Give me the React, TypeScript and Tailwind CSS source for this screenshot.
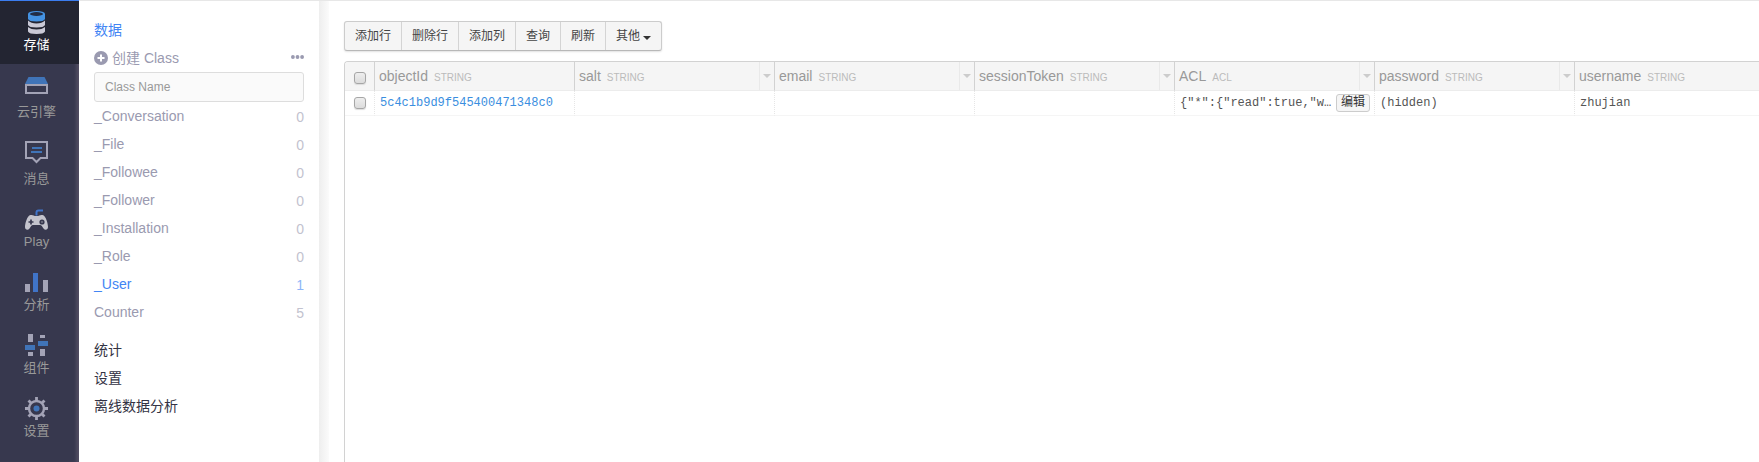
import React from "react";

const StorageIcon = () => (
  <svg width="17" height="24" viewBox="0 0 17 24" aria-hidden="true">
    <path d="M0 10.500Q3 13.500 8.500 13.500T17 10.500v4.500q-1 2.500-8.500 2.500T0 15z" fill="#c9c9d6" />
    <path d="M0 17Q3 19.500 8.500 19.500T17 17v4.500q-1 2.500-8.500 2.500T0 21.500z" fill="#c9c9d6" />
    <path d="M0 3.500Q1 1 8.500 1T17 3.500V9q-1 2.500-8.500 2.500T0 9z" fill="#4492e2" />
    <ellipse cx="8.500" cy="4" rx="6.500" ry="1.900" fill="#222c44" />
  </svg>
);

const CloudIcon = () => (
  <svg width="23" height="24" viewBox="0 0 23 24" aria-hidden="true">
    <path d="M3.500 4h16L23 11H0z" fill="#4074b8" />
    <path d="M1 12h21v8H1z" fill="none" stroke="#a3a3b6" strokeWidth="2" />
  </svg>
);

const MessageIcon = () => (
  <svg width="23" height="24" viewBox="0 0 23 24" aria-hidden="true">
    <path d="M1 2h21v16h-6.500l-4 4-4-4H1z" fill="none" stroke="#a3a3b6" strokeWidth="2" />
    <path d="M7 7h10v2H7zM6 11h11v2H6z" fill="#4074b8" />
  </svg>
);

const PlayIcon = () => (
  <svg width="23" height="24" viewBox="0 0 23 24" aria-hidden="true">
    <path d="M11.500 8.500V5.500q0-2 2-2H18" fill="none" stroke="#4074c8" strokeWidth="2" />
    <path
      d="M5.500 8C8 7.500 8.500 9 11.500 9S15 7.500 17.500 8C21 8.800 23 17 23 20c0 3-3 3.500-4.500 1.500-1.200-1.700-2-3.500-3.500-3.500H8c-1.500 0-2.300 1.800-3.500 3.500C3 23.500 0 23 0 20 0 17 2 8.800 5.500 8z"
      fill="#c4c4cd"
    />
    <path d="M6 12.500v5M3.500 15h5" stroke="#37384e" strokeWidth="1.700" />
    <circle cx="17" cy="15" r="2.600" fill="#37384e" />
    <circle cx="17" cy="15" r="1" fill="#777889" />
  </svg>
);

const ChartIcon = () => (
  <svg width="23" height="24" viewBox="0 0 23 24" aria-hidden="true">
    <path d="M0 14h5v8H0zM18 10h5v12h-5z" fill="#a3a3b6" />
    <path d="M8 3h5v19H8z" fill="#4074c8" />
  </svg>
);

const ComponentIcon = () => (
  <svg width="23" height="24" viewBox="0 0 23 24" aria-hidden="true">
    <path d="M3 1h5v8H3zM3 19h5v4H3zM15 2h5v3h-5zM15 16h5v7h-5z" fill="#a3a3b6" />
    <path d="M0 12h10v5H0zM13 8h10v5H13z" fill="#4074b8" />
  </svg>
);

const GearIcon = () => (
  <svg width="23" height="24" viewBox="0 0 23 24" aria-hidden="true">
    <circle cx="11.500" cy="12.500" r="7.500" fill="none" stroke="#a3a3b6" strokeWidth="2.400" />
    <path
      d="M11.500 1v4M11.500 20v4M0 12.500h4M19 12.500h4M3.500 4.500l2.800 2.800M16.700 17.700l2.800 2.800M3.500 20.500l2.800-2.800M16.700 7.300l2.800-2.800"
      stroke="#a3a3b6"
      strokeWidth="2.800"
    />
    <circle cx="11.500" cy="12.500" r="3" fill="#4074b8" />
  </svg>
);

const navItems = [
  { label: "存储", icon: <StorageIcon />, active: true },
  { label: "云引擎", icon: <CloudIcon />, tall: true },
  { label: "消息", icon: <MessageIcon />, tall: true },
  { label: "Play", icon: <PlayIcon /> },
  { label: "分析", icon: <ChartIcon /> },
  { label: "组件", icon: <ComponentIcon /> },
  { label: "设置", icon: <GearIcon /> },
];

const classes = [
  { name: "_Conversation", count: 0 },
  { name: "_File", count: 0 },
  { name: "_Followee", count: 0 },
  { name: "_Follower", count: 0 },
  { name: "_Installation", count: 0 },
  { name: "_Role", count: 0 },
  { name: "_User", count: 1, active: true },
  { name: "Counter", count: 5 },
];

const columns = [
  { name: "objectId", type: "STRING", menu: false },
  { name: "salt", type: "STRING", menu: true },
  { name: "email", type: "STRING", menu: true },
  { name: "sessionToken", type: "STRING", menu: true },
  { name: "ACL", type: "ACL", menu: true },
  { name: "password", type: "STRING", menu: true },
  { name: "username", type: "STRING", menu: true },
];

const actions = ["添加行", "删除行", "添加列", "查询", "刷新"];

function Tick({ label }: { label: string }) {
  return (
    <input
      type="checkbox"
      aria-label={label}
      className="block size-3 appearance-none rounded-[3px] border border-[#a6a6a6] bg-linear-to-b from-[#eeeeee] to-[#dcdcdc] shadow-[0_1px_1px_#dddddd] checked:bg-[#3a8ee0]"
    />
  );
}

function Nav() {
  return (
    <nav className="w-[79px] shrink-0 border-t border-[#3b7df0] bg-[#37384e] shadow-[inset_-4px_0_3px_-1px_#504c61]">
      {navItems.map((item) => (
        <a
          key={item.label}
          href="#"
          className={`flex flex-col items-center gap-px pt-[9px] pr-[6px] pb-[9px] text-[13px] leading-5 ${
            item.active ? "bg-[#232532] text-white" : "text-[#999999]"
          }`}
        >
          <span className={`flex items-start ${item.tall ? "h-7" : "h-6"}`}>{item.icon}</span>
          <span>{item.label}</span>
        </a>
      ))}
    </nav>
  );
}

function Sidebar() {
  return (
    <aside className="w-60 shrink-0 border-t border-[#e7e7e7] px-[15px] pt-[15px] text-sm leading-7 text-[#9a9ab0]">
      <a href="#" className="block text-[#4285f4]">
        数据
      </a>
      <div className="flex items-center justify-between">
        <button type="button" className="flex items-center gap-1">
          <svg width="14" height="14" viewBox="0 0 14 14" aria-hidden="true">
            <circle cx="7" cy="7" r="7" fill="#9a9ab0" />
            <path d="M7 3.500v7M3.500 7h7" stroke="#fff" strokeWidth="2" />
          </svg>
          创建 Class
        </button>
        <button type="button" aria-label="More" className="pb-[2px]">
          <svg width="13" height="4" viewBox="0 0 13 4" aria-hidden="true" fill="#9a9ab0">
            <circle cx="1.900" cy="2" r="1.900" />
            <circle cx="6.500" cy="2" r="1.900" />
            <circle cx="11.100" cy="2" r="1.900" />
          </svg>
        </button>
      </div>
      <input
        type="text"
        aria-label="Class Name"
        placeholder="Class Name"
        className="block h-[30px] w-full rounded-[3px] border border-[#dddddd] bg-[#fafafa] px-[10px] text-xs text-[#555555] placeholder:text-[#999999]"
      />
      <ul>
        {classes.map((c) => (
          <li key={c.name}>
            <a href="#" className={`flex justify-between ${c.active ? "text-[#4285f4]" : ""}`}>
              <span>{c.name}</span>
              <span className="pt-[3px] leading-[25px] opacity-60">{c.count}</span>
            </a>
          </li>
        ))}
      </ul>
      <div className="pt-[10px] text-[#333344]">
        <a href="#" className="block">
          统计
        </a>
        <a href="#" className="block">
          设置
        </a>
        <a href="#" className="block">
          离线数据分析
        </a>
      </div>
    </aside>
  );
}

function Toolbar() {
  return (
    <div className="mb-[10px] flex h-[30px] w-fit divide-x divide-[#d4d4d4] rounded-[3px] border border-[#cccccc] border-b-[#b8b8b8] bg-[#f5f5f5] text-xs text-[#444444] shadow-[0_1px_2px_#e2e2e2]">
      {actions.map((a) => (
        <button key={a} type="button" className="px-[10px] pb-px">
          {a}
        </button>
      ))}
      <button type="button" className="flex items-center gap-[3px] px-[10px] pb-px">
        其他
        <span className="mt-1 border-x-4 border-t-4 border-x-transparent border-t-[#333333]" />
      </button>
    </div>
  );
}

function DataTable() {
  return (
    <div className="flex-1 overflow-hidden rounded-tl-[4px] border-t border-l border-[#d2d2d2]">
      <table className="w-[1430px] table-fixed border-separate border-spacing-0 text-left">
        <colgroup>
          <col className="w-[30px]" />
          {columns.map((c) => (
            <col key={c.name} className="w-[200px]" />
          ))}
        </colgroup>
        <thead>
          <tr className="h-[29px] bg-[#f5f5f5]">
            <th className="border-r border-b border-r-[#d2d2d2] border-b-[#ececec] pt-1 pl-[9px]">
              <Tick label="Select all rows" />
            </th>
            {columns.map((c) => (
              <th key={c.name} className="border-r border-b border-r-[#d2d2d2] border-b-[#ececec] p-0 font-normal">
                <div className="flex h-7 items-center">
                  <span className="flex-1 pl-1 text-sm text-[#999999]">
                    {c.name}
                    <span className="pl-[6px] text-[10px] text-[#bbbbbb]">{c.type}</span>
                  </span>
                  {c.menu && (
                    <button
                      type="button"
                      aria-label={`${c.name} menu`}
                      className="flex h-full w-[15px] items-center justify-center border-l border-[#e9e9e9]"
                    >
                      <span className="border-x-4 border-t-4 border-x-transparent border-t-[#cccccc]" />
                    </button>
                  )}
                </div>
              </th>
            ))}
          </tr>
        </thead>
        <tbody className="font-['Liberation_Mono','Noto_Sans_CJK_SC',monospace] text-xs text-[#555555] [&_td]:border-r [&_td]:border-b [&_td]:border-r-[#e6e6e6] [&_td]:border-b-[#f5f5f5] [&_td]:[border-right-style:dotted]">
          <tr className="h-[25px]">
            <td className="py-0 pl-[9px]">
              <Tick label="Select row 5c4c1b9d9f545400471348c0" />
            </td>
            <td className="py-0 pr-0 pl-[5px]">
              <a href="#" className="text-[#3a8ee0]">
                5c4c1b9d9f545400471348c0
              </a>
            </td>
            <td />
            <td />
            <td />
            <td className="py-0 pr-1 pl-[5px]">
              <div className="flex items-center justify-between gap-1">
                <span className="whitespace-nowrap">{'{"*":{"read":true,"w…'}</span>
                <button
                  type="button"
                  className="flex h-[18px] shrink-0 items-center rounded-[3px] border border-[#cccccc] bg-[#f5f5f5] px-1 pb-[2px] font-['Liberation_Sans','Noto_Sans_CJK_SC',sans-serif] leading-4 text-[#333333]"
                >
                  编辑
                </button>
              </div>
            </td>
            <td className="py-0 pr-0 pl-[5px]">(hidden)</td>
            <td className="py-0 pr-0 pl-[5px]">zhujian</td>
          </tr>
        </tbody>
      </table>
    </div>
  );
}

export default function App() {
  return (
    <div className="flex min-h-screen overflow-hidden bg-white font-['Liberation_Sans','Noto_Sans_CJK_SC',sans-serif]">
      <Nav />
      <Sidebar />
      <div className="w-[10px] shrink-0 border-t border-[#e7e7e7] bg-linear-to-r from-[#eeeeee] to-[#fbfbfb]" />
      <main className="flex min-w-0 flex-1 flex-col border-t border-[#e7e7e7] pt-5 pl-[15px]">
        <Toolbar />
        <DataTable />
      </main>
    </div>
  );
}
